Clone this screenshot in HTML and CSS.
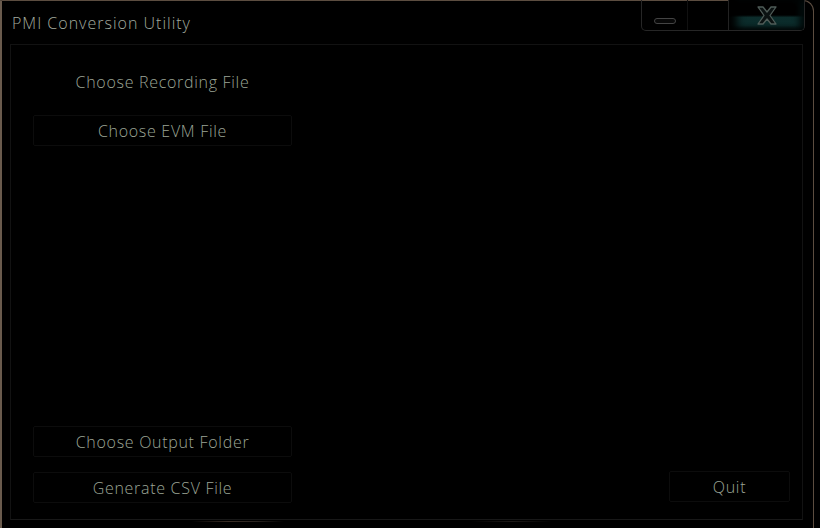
FILE: index.html
```html
<!DOCTYPE html>
<html>
<head>
<meta charset="utf-8">
<link rel="stylesheet" href="styles.css">
</head>
<body>
<div class="window">
  <div class="titlebar">
    <div class="title">PMI Conversion Utility</div>
    <div class="caption">
      <div class="cap cap-min"><span class="min-glyph"></span></div>
      <div class="cap cap-max"></div>
      <div class="cap cap-close">
        <svg class="x-glyph" width="24" height="19" viewBox="0 0 24 19">
          <path d="M3 1 H8 L12 6 L16 1 H21 L15 9.5 L21 18 H16 L12 13 L8 18 H3 L9 9.5 Z" fill="#0b1212" stroke="#4f5c58" stroke-width="1.3" stroke-linejoin="round"/>
        </svg>
      </div>
    </div>
  </div>
  <div class="panel">
    <div class="left-col">
      <div class="btn">Choose Recording File</div>
      <div class="btn">Choose EVM File</div>
      <div class="spacer"></div>
      <div class="btn">Choose Output Folder</div>
      <div class="btn">Generate CSV File</div>
    </div>
    <div class="right-col">
      <div class="btn btn-quit">Quit</div>
    </div>
  </div>
  <div class="bottom-glow">
    <span class="glow glow-a"></span>
    <span class="glow glow-b"></span>
  </div>
</div>
</body>
</html>
```
FILE: styles.css
```css
html, body {
  margin: 0;
  padding: 0;
  background: #000;
}
body {
  width: 820px;
  height: 528px;
  overflow: hidden;
  font-family: "Open Sans", "Noto Sans", "DejaVu Sans", sans-serif;
}
.window {
  box-sizing: border-box;
  width: 814px;
  height: 536px;
  border-left: 2px solid #6a5b4d;
  border-top: 1px solid #5c4d40;
  border-right: 1px solid #5c4d40;
  border-top-right-radius: 11px;
  background: #000;
  display: flex;
  flex-direction: column;
  position: relative;
}
.titlebar {
  height: 43px;
  display: flex;
  justify-content: space-between;
  align-items: flex-start;
}
.title {
  padding: 12px 0 0 10px;
  font-size: 16px;
  line-height: 20px;
  font-weight: 300;
  color: #a2ab9f;
  letter-spacing: 1px;
}
.caption {
  margin-right: 8px;
  margin-top: -1px;
  height: 30px;
  display: flex;
  border: 1px solid #262626;
  border-top: none;
  border-radius: 0 0 5px 5px;
  overflow: hidden;
}
.cap {
  height: 30px;
  display: flex;
  align-items: center;
  justify-content: center;
}
.cap-min {
  width: 45px;
  border-right: 1px solid #111;
  align-items: flex-end;
}
.min-glyph {
  display: block;
  width: 20px;
  height: 4px;
  margin-bottom: 6px;
  border: 1px solid #444;
  border-radius: 3px;
  background: #080808;
}
.cap-max {
  width: 40px;
  border-right: 1px solid #222;
}
.cap-close {
  width: 75px;
  align-items: flex-start;
  background: linear-gradient(to bottom, #000 0, #000 50%, #0c2c2b 58%, #0c2e2d 85%, #061616 100%);
  box-shadow: inset 8px 0 8px #000, inset -5px 0 6px #020c0c;
}
.x-glyph {
  display: block;
  margin-top: 6px;
}
.panel {
  flex: 0 0 auto;
  height: 476px;
  box-sizing: border-box;
  margin: 0 10px 0 8px;
  border: 1px solid #121212;
  border-bottom-color: #181818;
  display: flex;
  justify-content: space-between;
  padding: 21px 12px 16px 22px;
}
.left-col {
  width: 259px;
  display: flex;
  flex-direction: column;
}
.right-col {
  width: 121px;
  display: flex;
  flex-direction: column;
  justify-content: flex-end;
  padding-bottom: 1px;
}
.spacer {
  flex: 1;
}
.btn {
  box-sizing: border-box;
  height: 31px;
  border: 1px solid #0c0c0c;
  border-radius: 2px;
  display: flex;
  align-items: center;
  justify-content: center;
  font-size: 16px;
  font-weight: 300;
  color: #9ca596;
  letter-spacing: 0.7px;
}
.left-col .btn:nth-child(1) {
  border-color: #000;
  margin-bottom: 18px;
}
.left-col .btn:nth-child(4) {
  margin-bottom: 15px;
}
.bottom-glow {
  position: absolute;
  left: 0;
  right: 0;
  top: 520px;
  height: 2px;
}
.glow {
  position: absolute;
  top: 0;
  height: 1px;
}
.glow-a {
  left: 190px;
  width: 92px;
  background: linear-gradient(to right, transparent, #3a2e26 40%, #2a2420 70%, transparent);
}
.glow-b {
  left: 470px;
  width: 80px;
  background: linear-gradient(to right, transparent, #1e1a18 50%, transparent);
}
```
